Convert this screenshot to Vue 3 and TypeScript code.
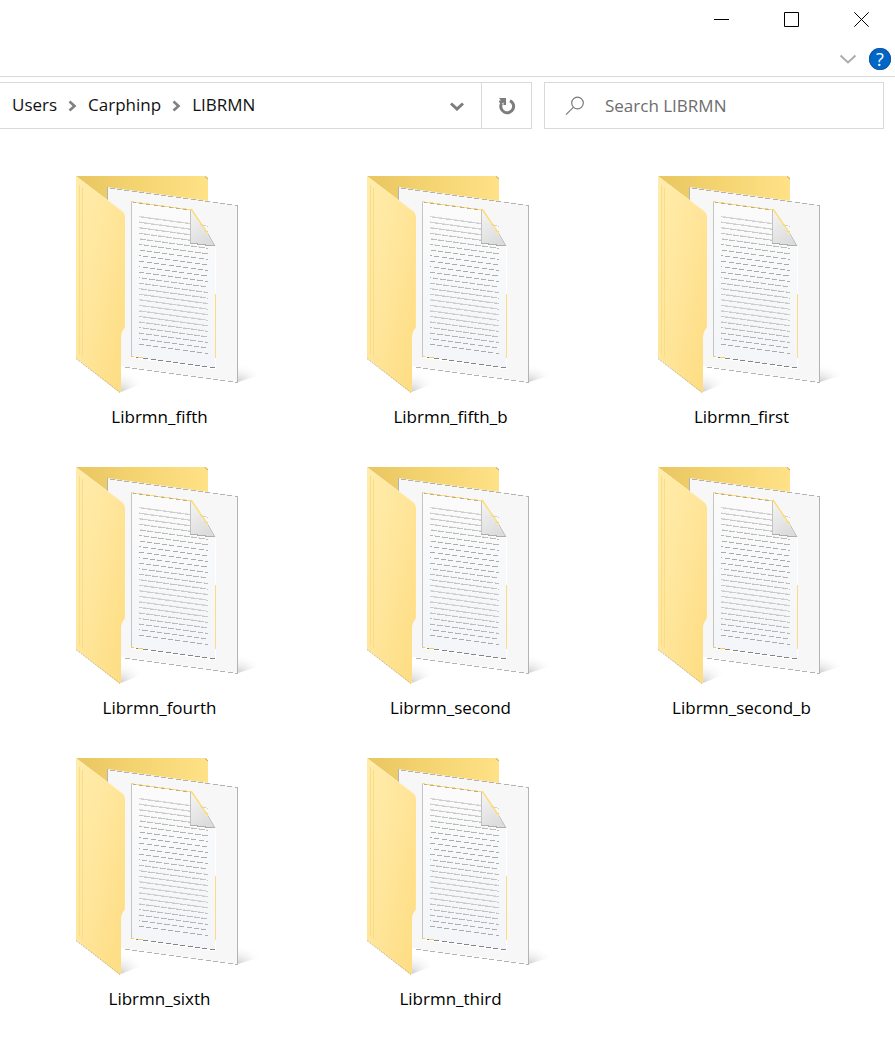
<script setup lang="ts">
import { ref } from 'vue'

const crumbs = ['Users', 'Carphinp', 'LIBRMN']
const folders = [
  'Librmn_fifth', 'Librmn_fifth_b', 'Librmn_first',
  'Librmn_fourth', 'Librmn_second', 'Librmn_second_b',
  'Librmn_sixth', 'Librmn_third',
]
const query = ref('')

// A slanted rule drawn as short horizontal runs, one for each pixel row it crosses
const SLOPE = 0.136
function steps(x0: number, x1: number, y: number, run: number, shift = 0): string {
  let d = ''
  const last = y + (x1 - x0) * SLOPE + 1
  for (let row = Math.floor(y) - 1; row <= last; row++) {
    const centre = x0 + (row + 0.5 - y) / SLOPE + shift
    const from = Math.max(x0, Math.round(centre - run / 2))
    const to = Math.min(x1, Math.round(centre + run / 2))
    if (to > from) d += `M${from} ${row}.5H${to}`
  }
  return d
}

// Text rows on the document: tone and run length vary slowly down the page
const rows = Array.from({ length: 24 }, (_, i) => {
  const t = Math.cos((Math.PI * i) / 16) ** 2
  const y = 46.8 + i * 5.54
  const grey = Math.round(170 + 36 * t)
  return {
    dark: steps(79, 148, y, 5 + 2 * t),
    pale: steps(79, 146, y, 4 * t, 5),
    tone: `rgb(${grey},${grey},${grey + 1})`,
  }
})
const sheetTop = steps(47, 178, 17.8, 5)
const sheetBottom = steps(62, 178, 196.8, 5)
const docTopGold = steps(71, 131, 31.6, 8)
const docTop = steps(73, 131, 32.4, 4)
const docBottomLight = steps(72, 156, 187.6, 8)
const docBottom = steps(72, 156, 186.6, 5)
</script>

<template>
  <main class="window">
    <header class="titlebar">
      <button class="win" aria-label="Minimize"><svg width="15" height="16" viewBox="0 0 15 16"><path d="M0 8.5H15" /></svg></button>
      <button class="win" aria-label="Maximize"><svg width="15" height="16" viewBox="0 0 15 16"><path d="M.5 1.5H14.5V15.5H.5Z" /></svg></button>
      <button class="win" aria-label="Close"><svg width="15" height="16" viewBox="0 0 15 16"><path d="M.3 1.300L14.700 15.700M14.700 1.300L.3 15.700" /></svg></button>
    </header>
    <div class="ribbon">
      <button class="expand" aria-label="Expand ribbon"><svg width="18" height="12" viewBox="0 0 18 12"><path d="M1.500 2.500L9 9.500L16.500 2.500" fill="none" stroke="#acacac" stroke-width="2" /></svg></button>
      <button class="help" aria-label="Help">?</button>
    </div>
    <div class="bar">
      <nav class="address" aria-label="Path">
        <template v-for="(c, i) in crumbs" :key="c">
          <svg v-if="i > 0" class="sep" width="9" height="12" viewBox="0 0 9 12"><path d="M1.500 1.500L6.500 6L1.500 10.500" fill="none" stroke="#808080" stroke-width="2.600" /></svg>
          <a href="#" class="crumb">{{ c }}</a>
        </template>
        <button class="history" aria-label="Previous locations"><svg width="14" height="10" viewBox="0 0 14 10"><path d="M1 2.500L7 8L13 2.500" fill="none" stroke="#7d7d7d" stroke-width="3" /></svg></button>
      </nav>
      <button class="refresh" aria-label="Refresh">
        <svg width="18" height="18" viewBox="0 0 18 18"><path d="M12 3.600A6.400 6.400 0 1 1 3.600 6.200" fill="none" stroke="#7d7d7d" stroke-width="3" /><path d="M1 1H8V8H5.500V5.500L3 7L1 5V3.500H3Z" fill="#7d7d7d" /></svg>
      </button>
      <label class="search">
        <svg width="20" height="20" viewBox="0 0 20 20"><circle cx="12.5" cy="7" r="5.8" fill="none" stroke="#7a7a7a" stroke-width="1.2" /><path d="M8.300 11.300L1 18.600" stroke="#7a7a7a" stroke-width="1.200" /></svg>
        <input v-model="query" type="text" placeholder="Search LIBRMN" aria-label="Search LIBRMN" />
      </label>
    </div>

    <svg class="defs" width="0" height="0" aria-hidden="true">
      <defs>
        <linearGradient id="back" x1="0" y1="0" x2="1" y2="0"><stop offset="0" stop-color="#e8c661" /><stop offset=".5" stop-color="#f5d572" /><stop offset="1" stop-color="#ffe187" /></linearGradient>
        <linearGradient id="flap" x1="0" y1="0" x2="1" y2="1"><stop offset="0" stop-color="#ffecac" /><stop offset=".45" stop-color="#ffe69c" /><stop offset="1" stop-color="#fedc80" /></linearGradient>
        <linearGradient id="sheet" x1="0" y1="0" x2="0" y2="1"><stop offset="0" stop-color="#fbfbfb" /><stop offset="1" stop-color="#f3f5f8" /></linearGradient>
        <linearGradient id="fold" x1="0" y1="0" x2=".5" y2="1"><stop offset="0" stop-color="#f5f5f5" /><stop offset="1" stop-color="#dcdcdc" /></linearGradient>
        <radialGradient id="shade" cx="0" cy="1" r="1"><stop offset="0" stop-color="#cfcfcf" /><stop offset="1" stop-color="#fff" stop-opacity="0" /></radialGradient>
        <g id="folder">
          <path d="M61 199V222L86 212Q75 203 61 199Z" fill="url(#shade)" />
          <path d="M178 193V212L204 204Q192 197 178 193Z" fill="url(#shade)" />
          <path d="M16 6H146L148 8V100H16Z" fill="url(#back)" />
          <path d="M145 6.500L148 9" stroke="#b5a984" fill="none" />
          <path d="M47 17L178 35V212L55 195V140H47Z" fill="#f7f7f7" />
          <path d="M47.500 17V60M177.500 35V212" stroke="#b3b3b3" fill="none" />
          <path :d="sheetTop" stroke="#b3b3b3" />
          <path :d="sheetBottom" stroke="#b3b3b3" />
          <path d="M71 31L131 39L156 76V198L71 186Z" fill="url(#sheet)" />
          <path d="M71.500 32V186" stroke="#c4c5c6" fill="none" />
          <path :d="docTopGold" stroke="#fbda7a" />
          <path :d="docTop" stroke="#b4b0a4" />
          <path :d="docBottomLight" stroke="#fff" />
          <path :d="docBottom" stroke="#858585" />
          <path d="M71 186.500H74M78 187.500H83" stroke="#f5cf5e" />
          <template v-for="(r, i) in rows" :key="i">
            <path :d="r.pale" stroke="#dedfe0" />
            <path :d="r.dark" :stroke="r.tone" />
          </template>
          <path d="M130.500 40L155 76L130.500 73Z" fill="url(#fold)" />
          <path d="M130.500 40V73" stroke="#c2c2c2" fill="none" />
          <path d="M130 73.500H138M137 74.500H146M145 75.500H155" stroke="#adadad" fill="none" />
          <path d="M131 39L148 64" stroke="#fddc7b" stroke-width="1.500" fill="none" />
          <path d="M148 64L155 76" stroke="#b9b9b9" fill="none" />
          <path d="M155.500 77V124M155.500 188V198" stroke="#fff" />
          <path d="M155.500 124V188" stroke="#fbdc83" />
          <path d="M16 6L63 42Q65 44 65 47V156Q65 158 63 160Q61 163 61 167V221L60 223L16 188Z" fill="url(#flap)" />
          <path d="M19.500 15V184M22.500 18V187" stroke="#fadc85" fill="none" />
          <path d="M64.500 47V156" stroke="#ffe391" fill="none" />
          <path d="M16 188.500L60 222.500" stroke="#c8b98d" stroke-dasharray="2 1" fill="none" />
          <path d="M16 6.500L63 42" stroke="#ffeeb4" fill="none" />
        </g>
      </defs>
    </svg>
    <ul class="grid">
      <li v-for="name in folders" :key="name" class="tile">
        <svg width="200" height="230" viewBox="0 0 200 230" aria-hidden="true"><use href="#folder" /></svg>
        <span>{{ name }}</span>
      </li>
    </ul>
  </main>
</template>

<style>
body { margin: 0; background: #fff; }
</style>
<style scoped>
.window { font: 17px/24px "Open Sans", "Noto Sans", sans-serif; color: #111; background: #fff; min-height: 100vh; }
button { border: 0; padding: 0; background: none; font: inherit; display: flex; align-items: center; justify-content: center; }
.titlebar { display: flex; justify-content: flex-end; height: 38px; }
.win { padding: 0 28px 0 27px; }
.win:last-child { padding-right: 26px; }
.win path { fill: none; stroke: #000; }
.ribbon { display: flex; justify-content: flex-end; align-items: center; gap: 12px; height: 39px; padding: 4px 4px 0 0; box-sizing: border-box; border-bottom: 1px solid #d9d9d9; }
.help { width: 22px; height: 22px; border-radius: 50%; background: #0067c8; box-shadow: inset 0 0 0 1px #17579a; color: #fff; font-size: 18px; font-weight: 500; line-height: 22px; }
.bar { display: flex; padding: 5px 11px 0 0; height: 47px; }
.address { flex: 1; display: flex; align-items: center; border: 1px solid #d9d9d9; border-left: 0; padding-left: 12px; }
.crumb { color: #111; text-decoration: none; padding-bottom: 2px; }
.sep { margin: 0 11px; }
.history { margin-left: auto; width: 48px; height: 100%; }
.refresh { width: 50px; border: 1px solid #d9d9d9; border-left: 0; }
.search { width: 340px; box-sizing: border-box; margin-left: 12px; border: 1px solid #d9d9d9; display: flex; align-items: center; gap: 20px; padding-left: 20px; }
.search input { flex: 1; min-width: 0; border: 0; outline: 0; padding: 0; background: none; font: inherit; color: #111; }
.search input::placeholder { color: #6d6d6d; opacity: 1; }
.defs { display: block; }
.grid { list-style: none; margin: 0; padding: 41px 0 0 14px; display: grid; grid-template-columns: repeat(auto-fill, 291px); grid-auto-rows: 291px; }
.tile { display: flex; flex-direction: column; align-items: center; color: #000; }
.tile span { margin-top: 5px; }
</style>
